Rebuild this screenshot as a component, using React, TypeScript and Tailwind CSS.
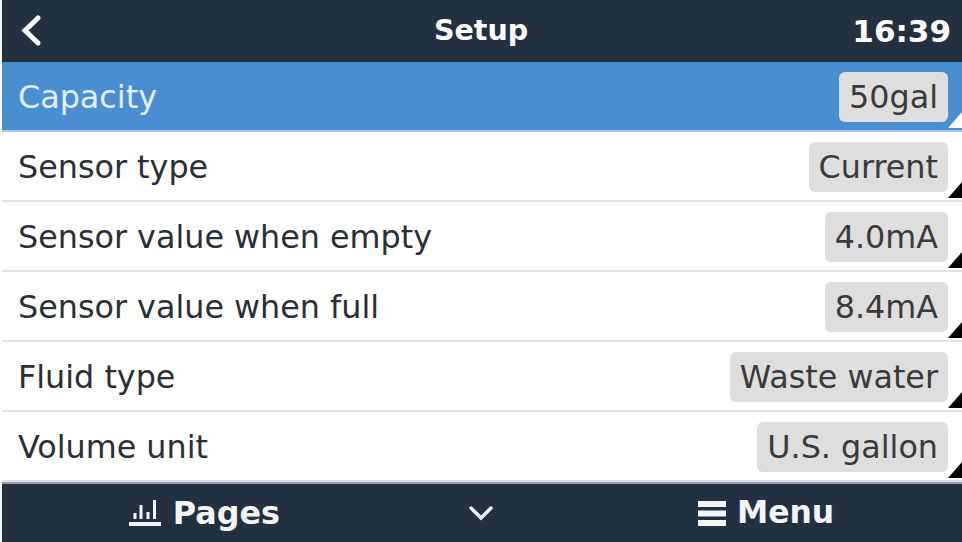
const rows = [
  { label: 'Capacity', value: '50gal', selected: true },
  { label: 'Sensor type', value: 'Current' },
  { label: 'Sensor value when empty', value: '4.0mA' },
  { label: 'Sensor value when full', value: '8.4mA' },
  { label: 'Fluid type', value: 'Waste water' },
  { label: 'Volume unit', value: 'U.S. gallon' },
];

function Row({ label, value, selected }: { label: string; value: string; selected?: boolean }) {
  return (
    <div
      className={`relative flex h-[70px] items-center justify-between border-b-2 pl-4 pr-[14px] pt-[2px] ${
        selected ? 'border-[#a9c9e8] bg-[#4a8ed2] text-[#e4eefa]' : 'border-[#dfe3e6] bg-white text-[#2b2f33]'
      }`}
    >
      <span>{label}</span>
      <span className="flex h-[50px] items-center rounded-md bg-[#dedede] px-[10px] text-[#3a3a3a]">{value}</span>
      <svg className="absolute bottom-[2px] right-0" width="14" height="16" viewBox="0 0 14 16">
        <path d="M14 0V16H0Z" fill={selected ? '#ffffff' : '#000000'} />
      </svg>
    </div>
  );
}

export default function App() {
  return (
    <div className="h-[542px] w-[962px] overflow-hidden bg-white pl-[2px] font-['DejaVu_Sans',sans-serif] text-[31.8px] leading-none">
      <header className="flex h-[62px] items-center bg-[#22303f] pl-4 pr-[11px] text-white">
        <div className="flex-1">
          <svg width="26" height="34" viewBox="0 0 26 34" fill="none" stroke="currentColor" strokeWidth="5" strokeLinecap="round">
            <path d="M20 4L7 16.500L20 29" />
          </svg>
        </div>
        <h1 className="mr-[7px] text-[28.5px] font-bold">Setup</h1>
        <div className="flex-1 text-right text-[31px] font-bold">16:39</div>
      </header>
      {rows.map((r) => (
        <Row key={r.label} {...r} />
      ))}
      <footer className="flex h-[60px] items-center border-t-2 border-[#9a9fa5] bg-[#22303f] text-[31.8px] font-bold text-[#f3f5f7]">
        <div className="flex w-[278px] items-center justify-end gap-[12px]">
          <svg width="32" height="26" viewBox="0 0 32 26" fill="currentColor">
            <path d="M0 22H32V26H0ZM4.500 13H7.500V19H4.500ZM10.500 5H13.500V19H10.500ZM17.500 12H20.500V19H17.500ZM24 0H27V19H24Z" />
          </svg>
          <span>Pages</span>
        </div>
        <div className="flex w-[402px] justify-center">
          <svg width="28" height="18" viewBox="0 0 28 18" fill="none" stroke="currentColor" strokeWidth="3.500" strokeLinecap="round">
            <path d="M4 4L14 14L24 4" />
          </svg>
        </div>
        <div className="flex items-center gap-[11px] pl-4">
          <svg width="28" height="25" viewBox="0 0 28 25" fill="currentColor">
            <path d="M0 0H28V6H0ZM0 9.500H28V15.500H0ZM0 19H28V25H0Z" />
          </svg>
          <span className="text-[31.4px]">Menu</span>
        </div>
      </footer>
    </div>
  );
}
